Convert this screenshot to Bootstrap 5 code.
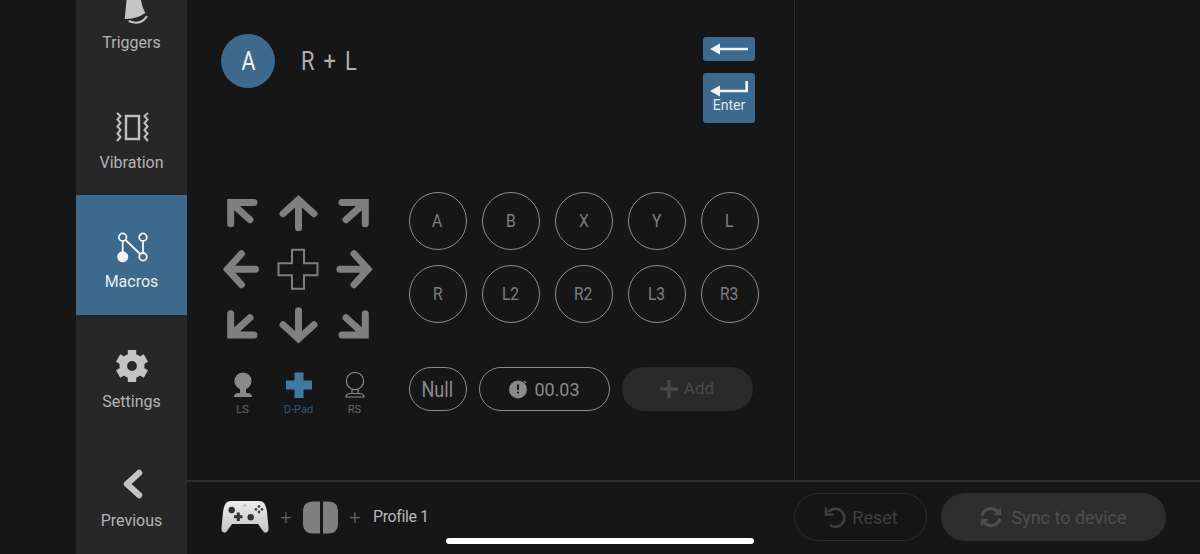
<!DOCTYPE html>
<html lang="en">
<head>
<meta charset="utf-8">
<title>Macros</title>
<link href="https://cdn.jsdelivr.net/npm/bootstrap@5.3.0/dist/css/bootstrap.min.css" rel="stylesheet">
<style>
html,body{height:554px;overflow:hidden;background:#161616;font-family:Roboto,"Liberation Sans",sans-serif;}
.app-shell{height:554px;padding-left:76px;position:relative;}
.side-rail{width:111px;flex:none;background:#272727;height:554px;justify-content:flex-end;}
.rail-item{height:119.6px;flex:none;padding-top:34px;color:#b4b4b4;font-size:16px;line-height:20px;}
.rail-item.is-on{background:#3d6a8c;color:#e8eef2;}
.rail-ico{width:44px;height:34px;margin:0 auto 9px;display:block;overflow:visible;}
.work-top{height:482px;border-bottom:2px solid #2c2c2c;flex:none;}
.edit-panel{width:608px;border-right:1px solid #2c2c2c;padding-left:26px;}
.head-row{height:184px;padding:34px 39px 0 8px;}
.key-a{width:54px;height:54px;background:#3d6a8c;color:#eef2f5;font-size:26px;}
.slim-txt{display:inline-block;transform:scaleX(.82);}
.combo{font-size:26px;color:#b0b0b0;margin-left:26px;letter-spacing:2.2px;line-height:54px;transform:scaleX(.84);transform-origin:left center;}
.key-col{width:52px;padding-top:3px;gap:12px;}
.blue-key{background:#3d6a8c;border-radius:3px;color:#dfe8ee;font-size:14px;line-height:16px;}
.key-back{height:24px;}
.key-enter{height:50px;padding-top:6px;}
.dpad-grid{display:grid;grid-template-columns:repeat(3,57px);grid-auto-rows:56.5px;}
.dpad-grid svg{width:57px;height:56.5px;display:block;}
.stick-grid{display:grid;grid-template-columns:repeat(3,56px);margin:17px 0 0 1.5px;font-size:11px;line-height:14px;color:#666;text-align:center;}
.stick-grid svg{width:28px;height:28px;display:block;margin:0 auto 4px;}
.stick-blue{color:#33566f;}
.pad-col{margin-left:24.5px;padding-top:8px;}
.btn-grid{display:grid;grid-template-columns:repeat(5,58px);gap:15px;}
.round-key{width:58px;height:58px;border:1px solid #8c8c8c;color:#7e7e7e;font-size:19px;}
.act-row{margin-top:44px;gap:12px;height:44px;color:#8a8a8a;}
.pill-out{border:1px solid #8c8c8c;border-radius:22px;height:44px;font-size:18px;}
.pill-null{width:58px;font-size:22px;}
.pill-time{width:131px;gap:6px;}
.pill-add{width:131px;border-radius:22px;height:44px;background:#2a2a2a;color:#474747;font-size:17px;gap:6px;}
.foot-bar{height:70px;padding:0 34px;}
.foot-plus{color:#666;font-size:20px;width:18px;text-align:center;font-weight:300;}
.profile-name{color:#b8b8b8;font-size:16px;letter-spacing:-.4px;margin-left:9px;}
.foot-btn{height:48px;border-radius:24px;color:#3f3f3f;font-size:18px;gap:5px;}
.foot-reset{width:133px;border:1px solid #2c2c2c;}
.foot-sync{width:225px;background:#2e2e2e;color:#4f4f4f;margin-left:14px;gap:9px;}
.home-bar{position:absolute;left:446px;bottom:10px;width:308px;height:6px;border-radius:3px;background:#fff;}
</style>
</head>
<body>
<div class="app-shell d-flex">
  <nav class="side-rail d-flex flex-column text-center">
    <div class="rail-item">
      <svg class="rail-ico" viewBox="0 0 44 34"><path d="M17 5L14.7 29Q27 29 35.3 23Q31 15 30.3 5Z" fill="#c4c4c4"/><path d="M18.7 31Q31 36 37 26" fill="none" stroke="#c4c4c4" stroke-width="2"/></svg>
      Triggers
    </div>
    <div class="rail-item">
      <svg class="rail-ico" viewBox="0 0 44 34" fill="none" stroke="#c0c0c0"><rect x="16" y="6" width="13" height="23" stroke-width="2.4"/><path d="M7 3L10.5 6L7.5 9.5L10.5 13L7.5 16.5L10.5 20L7.5 23.5L10.5 27L7 31M38 3L34.5 6L37.5 9.5L34.5 13L37.5 16.5L34.5 20L37.5 23.5L34.5 27L38 31" stroke-width="2"/></svg>
      Vibration
    </div>
    <div class="rail-item is-on">
      <svg class="rail-ico" viewBox="0 0 44 34" fill="none" stroke="#f2f5f7" stroke-width="1.8"><path d="M12.7 12V23M15.5 11L30.2 25M33 12V23.5"/><circle cx="12.7" cy="8.2" r="3.8"/><circle cx="33" cy="8.2" r="3.8"/><circle cx="33" cy="27.8" r="3.8"/><circle cx="12.7" cy="27.8" r="4.6" fill="#f2f5f7"/></svg>
      Macros
    </div>
    <div class="rail-item">
      <svg class="rail-ico" viewBox="-22 -17 44 34"><circle r="8.7" fill="none" stroke="#c4c4c4" stroke-width="7.6"/><g fill="#c4c4c4"><rect x="-4.2" y="-16" width="8.4" height="6"/><rect x="-4.2" y="-16" width="8.4" height="6" transform="rotate(60)"/><rect x="-4.2" y="-16" width="8.4" height="6" transform="rotate(120)"/><rect x="-4.2" y="-16" width="8.4" height="6" transform="rotate(180)"/><rect x="-4.2" y="-16" width="8.4" height="6" transform="rotate(240)"/><rect x="-4.2" y="-16" width="8.4" height="6" transform="rotate(300)"/></g></svg>
      Settings
    </div>
    <div class="rail-item">
      <svg class="rail-ico" viewBox="0 0 44 34" fill="none" stroke="#c4c4c4" stroke-width="6.4" stroke-linecap="round" stroke-linejoin="round"><path d="M29 5L17 16L29 27"/></svg>
      Previous
    </div>
  </nav>
  <main class="flex-grow-1 d-flex flex-column">
    <div class="work-top d-flex">
      <section class="edit-panel">
        <div class="head-row d-flex justify-content-between">
          <div class="d-flex align-items-start">
            <div class="key-a rounded-circle d-flex align-items-center justify-content-center"><span class="slim-txt">A</span></div>
            <div class="combo">R + L</div>
          </div>
          <div class="key-col d-flex flex-column">
            <div class="blue-key key-back d-flex align-items-center justify-content-center">
              <svg width="38" height="12" viewBox="0 0 38 12"><path d="M4 6H38" stroke="#f2f5f7" stroke-width="2.6"/><path d="M0 6L10 .5V11.5Z" fill="#f2f5f7"/></svg>
            </div>
            <div class="blue-key key-enter d-flex flex-column align-items-center">
              <svg width="38" height="18" viewBox="0 0 38 18"><path d="M4 12H36.7V2" fill="none" stroke="#f2f5f7" stroke-width="2.6"/><path d="M0 12L10 6.5V17.5Z" fill="#f2f5f7"/></svg>
              <span>Enter</span>
            </div>
          </div>
        </div>
        <div class="d-flex">
          <div>
            <div class="dpad-grid">
              <svg viewBox="-28.5 -28.25 57 56.5" fill="none" stroke="#7f7f7f" stroke-width="7" stroke-linecap="round"><path d="M12.5 -9.8H-10.8V11.5M-10.8 -9.8L8.5 7.5"/></svg>
              <svg viewBox="-28.5 -28.25 57 56.5" fill="none" stroke="#7f7f7f" stroke-width="7" stroke-linecap="round"><path d="M0 15.5V-12.5M-15.5 1.5L0 -12.5L15.5 1.5"/></svg>
              <svg viewBox="-28.5 -28.25 57 56.5" fill="none" stroke="#7f7f7f" stroke-width="7" stroke-linecap="round"><g transform="translate(-1 0) scale(-1 1)"><path d="M12.5 -9.8H-10.8V11.5M-10.8 -9.8L8.5 7.5"/></g></svg>
              <svg viewBox="-28.5 -28.25 57 56.5" fill="none" stroke="#7f7f7f" stroke-width="7" stroke-linecap="round"><g transform="translate(-1.5 0) rotate(-90)"><path d="M0 15.5V-12.5M-15.5 1.5L0 -12.5L15.5 1.5"/></g></svg>
              <svg viewBox="-28.5 -28.25 57 56.5" fill="none" stroke="#7f7f7f" stroke-width="2"><g transform="translate(-.5 0)"><path d="M-6 -19.5H6V-6H19.5V6H6V19.5H-6V6H-19.5V-6H-6Z"/></g></svg>
              <svg viewBox="-28.5 -28.25 57 56.5" fill="none" stroke="#7f7f7f" stroke-width="7" stroke-linecap="round"><g transform="rotate(90)"><path d="M0 15.5V-12.5M-15.5 1.5L0 -12.5L15.5 1.5"/></g></svg>
              <svg viewBox="-28.5 -28.25 57 56.5" fill="none" stroke="#7f7f7f" stroke-width="7" stroke-linecap="round"><g transform="scale(1 -1)"><path d="M12.5 -9.8H-10.8V11.5M-10.8 -9.8L8.5 7.5"/></g></svg>
              <svg viewBox="-28.5 -28.25 57 56.5" fill="none" stroke="#7f7f7f" stroke-width="7" stroke-linecap="round"><g transform="translate(0 1) rotate(180)"><path d="M0 15.5V-12.5M-15.5 1.5L0 -12.5L15.5 1.5"/></g></svg>
              <svg viewBox="-28.5 -28.25 57 56.5" fill="none" stroke="#7f7f7f" stroke-width="7" stroke-linecap="round"><g transform="translate(-1 0) scale(-1 -1)"><path d="M12.5 -9.8H-10.8V11.5M-10.8 -9.8L8.5 7.5"/></g></svg>
            </div>
            <div class="stick-grid">
              <div><svg viewBox="0 0 28 28"><circle cx="14" cy="10" r="8.6" fill="#8a8a8a"/><path d="M11 16H17V22H11Z" fill="#8a8a8a"/><path d="M5 26Q5 22 10 22H18Q23 22 23 26Z" fill="#8a8a8a"/></svg>LS</div>
              <div class="stick-blue"><svg viewBox="0 0 28 28"><path d="M9.5 1.5H18.5V9.5H27V18.5H18.5V27H9.5V18.5H1V9.5H9.5Z" fill="#3f7aa3"/></svg>D-Pad</div>
              <div><svg viewBox="0 0 28 28" fill="none" stroke="#8a8a8a" stroke-width="1.2"><circle cx="14" cy="10" r="8.6"/><path d="M11 18.5V22.5M17 18.5V22.5M5 26Q5 22.5 10 22.5H18Q23 22.5 23 26Z"/></svg>RS</div>
            </div>
          </div>
          <div class="pad-col">
            <div class="btn-grid">
              <div class="round-key rounded-circle d-flex align-items-center justify-content-center"><span class="slim-txt">A</span></div>
              <div class="round-key rounded-circle d-flex align-items-center justify-content-center"><span class="slim-txt">B</span></div>
              <div class="round-key rounded-circle d-flex align-items-center justify-content-center"><span class="slim-txt">X</span></div>
              <div class="round-key rounded-circle d-flex align-items-center justify-content-center"><span class="slim-txt">Y</span></div>
              <div class="round-key rounded-circle d-flex align-items-center justify-content-center"><span class="slim-txt">L</span></div>
              <div class="round-key rounded-circle d-flex align-items-center justify-content-center"><span class="slim-txt">R</span></div>
              <div class="round-key rounded-circle d-flex align-items-center justify-content-center"><span class="slim-txt">L2</span></div>
              <div class="round-key rounded-circle d-flex align-items-center justify-content-center"><span class="slim-txt">R2</span></div>
              <div class="round-key rounded-circle d-flex align-items-center justify-content-center"><span class="slim-txt">L3</span></div>
              <div class="round-key rounded-circle d-flex align-items-center justify-content-center"><span class="slim-txt">R3</span></div>
            </div>
            <div class="act-row d-flex">
              <div class="pill-out pill-null d-flex align-items-center justify-content-center"><span class="slim-txt">Null</span></div>
              <div class="pill-out pill-time d-flex align-items-center justify-content-center">
                <svg width="20" height="20" viewBox="0 0 20 20"><circle cx="10" cy="10.5" r="9" fill="#8a8a8a"/><path d="M10 5.5V11" stroke="#161616" stroke-width="2"/><circle cx="10" cy="13.5" r="1" fill="#161616"/><path d="M16 2L18 4" stroke="#8a8a8a" stroke-width="1.4"/></svg>
                <span>00.03</span>
              </div>
              <div class="pill-add d-flex align-items-center justify-content-center">
                <svg width="18" height="18" viewBox="0 0 18 18"><path d="M9 0V18M0 9H18" stroke="#474747" stroke-width="3.4"/></svg>
                <span>Add</span>
              </div>
            </div>
          </div>
        </div>
      </section>
    </div>
    <footer class="foot-bar d-flex align-items-center">
      <svg width="48" height="34" viewBox="0 0 48 34"><defs><linearGradient id="padFill" x1="0" y1="0" x2="0" y2="1"><stop offset="0" stop-color="#eee"/><stop offset="1" stop-color="#c4c4c4"/></linearGradient></defs><path d="M10 1H38C43 1 45 5 46 12L47.5 28C48 33 44 34 42 31L37 24H11L6 31C4 34 0 33 .5 28L2 12C3 5 5 1 10 1Z" fill="url(#padFill)"/><circle cx="10.7" cy="10" r="3.2" fill="#333"/><circle cx="29.7" cy="17.3" r="3.2" fill="#333"/><path d="M15.8 12.5H18.8V15.2H21.5V18.2H18.8V21H15.8V18.2H13V15.2H15.8Z" fill="#333"/><g fill="#444"><circle cx="38" cy="6.5" r="1.4"/><circle cx="38" cy="12" r="1.4"/><circle cx="35" cy="9.3" r="1.4"/><circle cx="41" cy="9.3" r="1.4"/></g><circle cx="24" cy="5.5" r="1.4" fill="#bbb"/></svg>
      <span class="foot-plus ms-2">+</span>
      <svg class="ms-2" width="35" height="33" viewBox="0 0 35 33" fill="#7f7f7f"><path d="M17 0.5V32.5H10Q0 32.5 0 23V10Q0 .5 10 .5Z"/><path d="M20 .5H25Q35 .5 35 10V23Q35 32.5 25 32.5H20Z"/></svg>
      <span class="foot-plus ms-2">+</span>
      <span class="profile-name">Profile 1</span>
      <div class="foot-btn foot-reset d-flex align-items-center justify-content-center ms-auto">
        <svg width="24" height="24" viewBox="0 0 24 24" fill="none" stroke="#3f3f3f" stroke-width="2.6"><path d="M5.5 7A9 9 0 1 1 7 20"/><path d="M3 2.5V9.5H10.5" stroke-width="2.4"/></svg>
        <span>Reset</span>
      </div>
      <div class="foot-btn foot-sync d-flex align-items-center justify-content-center">
        <svg width="22" height="22" viewBox="0 0 22 22" fill="none" stroke="#4f4f4f" stroke-width="3"><path d="M2 9.5A9.2 9.2 0 0 1 18 6"/><path d="M20 12.5A9.2 9.2 0 0 1 4 16"/><path d="M21 1.5V9H13.5Z" fill="#4f4f4f" stroke="none"/><path d="M1 20.5V13H8.5Z" fill="#4f4f4f" stroke="none"/></svg>
        <span>Sync to device</span>
      </div>
    </footer>
  </main>
  <div class="home-bar"></div>
</div>
</body>
</html>
